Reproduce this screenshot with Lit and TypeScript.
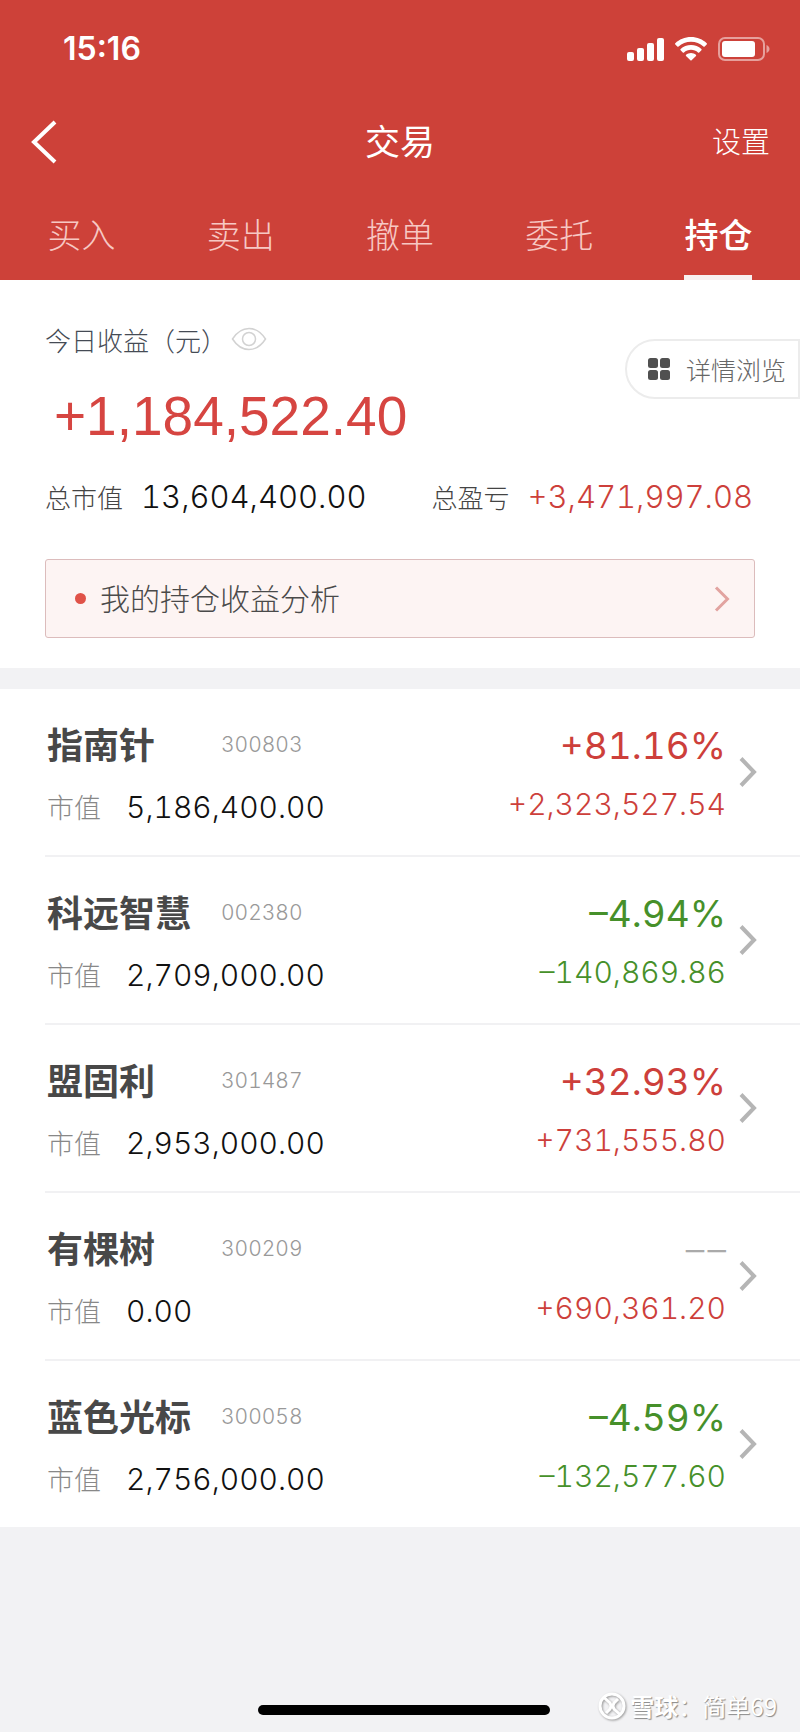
import { LitElement, html, css } from "lit";
import { customElement, property, state } from "lit/decorators.js";
import { classMap } from "lit/directives/class-map.js";

interface Holding {
  name: string;
  code: string;
  value: string;
  rate: string;
  profit: string;
}

const NO_RATE = "–\u200a–";

const HOLDINGS: Holding[] = [
  { name: "指南针", code: "300803", value: "5,186,400.00", rate: "+81.16%", profit: "+2,323,527.54" },
  { name: "科远智慧", code: "002380", value: "2,709,000.00", rate: "–4.94%", profit: "–140,869.86" },
  { name: "盟固利", code: "301487", value: "2,953,000.00", rate: "+32.93%", profit: "+731,555.80" },
  { name: "有棵树", code: "300209", value: "0.00", rate: NO_RATE, profit: "+690,361.20" },
  { name: "蓝色光标", code: "300058", value: "2,756,000.00", rate: "–4.59%", profit: "–132,577.60" },
];

const tone = (text: string) => ({
  up: text.startsWith("+"),
  down: /^–\d/.test(text),
  flat: text === NO_RATE,
});

const base = css`
  * {
    box-sizing: border-box;
  }
  button {
    margin: 0;
    padding: 0;
    border: 0;
    background: none;
    color: inherit;
    font: inherit;
    cursor: pointer;
  }
  a {
    color: inherit;
    text-decoration: none;
  }
  svg {
    display: block;
    flex: none;
  }
  .num {
    font-family: Inter, "Noto Sans CJK SC", sans-serif;
    font-weight: 300;
    font-variant-numeric: tabular-nums;
  }
  .up {
    color: #cd3f3b;
  }
  .down {
    color: #46902a;
  }
  .flat {
    color: #aaa;
  }
`;

@customElement("status-bar")
class StatusBar extends LitElement {
  static styles = [
    base,
    css`
      :host {
        display: flex;
        align-items: center;
        justify-content: space-between;
        height: 98px;
        padding: 0 30px 0 63px;
      }
      .time {
        font: 600 32px/38px Inter, sans-serif;
      }
      .icons {
        display: flex;
        align-items: center;
        gap: 10px;
      }
    `,
  ];

  render() {
    return html`
      <span class="time">15:16</span>
      <span class="icons">
        <svg width="38" height="24" viewBox="0 0 38 24" fill="#fff" aria-hidden="true">
          <rect x="0" y="15" width="7" height="9" rx="2" />
          <rect x="10" y="11" width="7" height="13" rx="2" />
          <rect x="20" y="6" width="7" height="18" rx="2" />
          <rect x="30" y="1" width="7" height="23" rx="2" />
        </svg>
        <svg width="32" height="24" viewBox="0 0 32 24" fill="#fff" aria-hidden="true">
          <path d="M16 0C9.800 0 4.200 2.400.3 6.200c-.4.4-.4.900 0 1.300l2 2c.3.400.900.400 1.300 0C6.800 6.500 11.200 4.700 16 4.700s9.200 1.800 12.400 4.800c.4.400 1 .4 1.300 0l2-2c.4-.4.4-.9 0-1.300C27.800 2.400 22.200 0 16 0z" />
          <path d="M16 7.900c-4 0-7.700 1.500-10.400 4-.4.400-.4 1 0 1.300l2.200 2.200c.3.300.8.300 1.200 0 1.800-1.700 4.300-2.700 7-2.700s5.200 1 7 2.700c.4.300.9.300 1.200 0l2.200-2.200c.4-.3.4-.9 0-1.300-2.700-2.500-6.400-4-10.400-4z" />
          <path d="M16 15.900c-1.900 0-3.600.7-4.900 1.800-.4.300-.4.800-.1 1.200l4.400 4.400c.3.300.9.300 1.200 0l4.400-4.400c.3-.4.300-.9-.1-1.200-1.300-1.100-3-1.800-4.900-1.800z" />
        </svg>
        <svg width="53" height="24" viewBox="0 0 53 24" aria-hidden="true">
          <rect x="2" y="1" width="45" height="22" rx="6" fill="none" stroke="#fff" stroke-opacity=".5" stroke-width="2" />
          <rect x="5" y="4" width="33" height="16" rx="3" fill="#fff" />
          <path d="M49.500 8c2 .8 3 2.400 3 4s-1 3.200-3 4z" fill="#fff" fill-opacity=".5" />
        </svg>
      </span>
    `;
  }
}

@customElement("trade-header")
class TradeHeader extends LitElement {
  @state() active = "持仓";

  static styles = [
    base,
    css`
      :host {
        display: block;
        background: #cd4139;
        color: #fff;
      }
      .bar {
        display: grid;
        grid-template-columns: 1fr auto 1fr;
        align-items: center;
        height: 88px;
        padding: 0 30px;
      }
      .back {
        justify-self: start;
      }
      .title {
        margin: 0;
        padding-bottom: 4px;
        font-size: 35px;
        font-weight: 400;
        line-height: 48px;
      }
      .settings {
        justify-self: end;
        padding-bottom: 4px;
        font-size: 29px;
        font-weight: 300;
        line-height: 40px;
      }
      .tabs {
        display: grid;
        grid-template-columns: repeat(5, 1fr);
        justify-items: center;
        height: 94px;
        padding: 0 2px;
      }
      .tab {
        color: #f7c8c4;
        border-top: 5px solid transparent;
        border-bottom: 5px solid transparent;
        font-size: 34px;
        font-weight: 300;
      }
      .tab.active {
        color: #fff;
        font-weight: 500;
        border-bottom-color: #f8f0f0;
      }
    `,
  ];

  render() {
    return html`
      <status-bar></status-bar>
      <div class="bar">
        <button class="back" aria-label="返回">
          <svg width="28" height="44" viewBox="0 0 28 44" fill="none" stroke="#fff" stroke-width="4">
            <path d="M25 2 4 22l21 20" />
          </svg>
        </button>
        <h1 class="title">交易</h1>
        <button class="settings">设置</button>
      </div>
      <nav class="tabs">
        ${["买入", "卖出", "撤单", "委托", "持仓"].map(
          (label) => html`<button
            class=${classMap({ tab: true, active: label === this.active })}
            @click=${() => (this.active = label)}
          >${label}</button>`
        )}
      </nav>
    `;
  }
}

@customElement("profit-summary")
class ProfitSummary extends LitElement {
  static styles = [
    base,
    css`
      :host {
        display: block;
        padding-bottom: 30px;
        background: #fff;
      }
      .hero {
        display: flex;
        justify-content: space-between;
        align-items: flex-start;
        padding: 39px 0 0 45px;
      }
      .caption {
        display: flex;
        align-items: center;
        gap: 4px;
        height: 40px;
        color: #454b55;
        font-size: 26px;
        font-weight: 300;
      }
      .today {
        margin: 25px 0 0 9px;
        font: 400 55px/64px "Liberation Sans", Arial, sans-serif;
        color: #d64541;
      }
      .detail {
        display: flex;
        align-items: center;
        gap: 16px;
        height: 60px;
        margin-top: 20px;
        padding: 0 12px 0 21px;
        border: 2px solid #ececec;
        border-radius: 30px 0 0 30px;
        color: #666;
        font-size: 25px;
        font-weight: 300;
      }
      .totals {
        display: flex;
        flex-wrap: wrap;
        justify-content: space-between;
        margin: 0;
        padding: 29px 47px 0 45px;
      }
      .total {
        display: flex;
        align-items: center;
        gap: 18px;
        color: #444;
        font-size: 26px;
        font-weight: 300;
        line-height: 40px;
      }
      .amount {
        margin: 0;
        font-size: 31px;
      }
      .plain {
        color: #111;
      }
      .analysis {
        display: flex;
        align-items: center;
        gap: 14px;
        height: 79px;
        margin: 42px 45px 0;
        padding: 0 24px 0 29px;
        border: 1px solid #dcbcbc;
        border-radius: 3px;
        background: #fdf4f3;
        color: #4a4a4a;
        font-size: 30px;
        font-weight: 300;
      }
      .label {
        padding-bottom: 4px;
      }
      .dot {
        width: 11px;
        height: 11px;
        border-radius: 50%;
        background: #e05248;
      }
      .go {
        margin-left: auto;
      }
    `,
  ];

  render() {
    return html`
      <div class="hero">
        <div>
          <div class="caption">
            <span>今日收益（元）</span>
            <button aria-label="隐藏金额">
              <svg width="36" height="24" viewBox="0 0 36 24" fill="none" stroke="#d2d2d2" stroke-width="1.500">
                <path d="M1.500 12C6 5 11.500 1.500 18 1.500S30 5 34.500 12C30 19 24.500 22.500 18 22.500S6 19 1.500 12z" />
                <circle cx="18" cy="12" r="6.500" />
              </svg>
            </button>
          </div>
          <div class="today">+1,184,522.40</div>
        </div>
        <button class="detail">
          <svg width="22" height="22" viewBox="0 0 22 22" fill="#505050" aria-hidden="true">
            <rect width="10" height="10" rx="2.500" />
            <rect x="12" width="10" height="10" rx="2.500" />
            <rect y="12" width="10" height="10" rx="2.500" />
            <rect x="12" y="12" width="10" height="10" rx="2.500" />
          </svg>
          <span>详情浏览</span>
        </button>
      </div>
      <dl class="totals">
        <div class="total"><dt>总市值</dt><dd class="amount num plain">13,604,400.00</dd></div>
        <div class="total"><dt>总盈亏</dt><dd class="amount num up">+3,471,997.08</dd></div>
      </dl>
      <a class="analysis" href="#analysis">
        <span class="dot"></span>
        <span class="label">我的持仓收益分析</span>
        <svg class="go" width="16" height="26" viewBox="0 0 16 26" fill="none" stroke="#e2a3a0" stroke-width="3">
          <path d="M2 1.500 13.500 13 2 24.500" />
        </svg>
      </a>
    `;
  }
}

@customElement("holding-row")
class HoldingRow extends LitElement {
  @property({ attribute: false }) item!: Holding;

  static styles = [
    base,
    css`
      :host {
        display: block;
      }
      .row {
        display: flex;
        align-items: center;
        height: 100%;
        padding: 0 43px 0 2px;
      }
      .info {
        flex: 1;
      }
      .line {
        display: flex;
        align-items: center;
      }
      .name {
        min-width: 174px;
        color: #484848;
        font-size: 36px;
        font-weight: 700;
        line-height: 52px;
      }
      .code {
        padding-top: 2px;
        color: #999;
        font-size: 21px;
      }
      .worth {
        gap: 25px;
        margin-top: 18px;
        color: #888;
        font-size: 27px;
        font-weight: 300;
        line-height: 40px;
      }
      .value {
        color: #111;
        font-size: 30px;
      }
      .result {
        display: flex;
        flex-direction: column;
        align-items: flex-end;
        margin-right: 13px;
      }
      .rate {
        font-size: 37px;
        font-weight: 400;
        line-height: 52px;
      }
      .rate.flat {
        font-weight: 300;
      }
      .profit {
        margin-top: 12px;
        font-size: 30px;
        line-height: 40px;
      }
    `,
  ];

  render() {
    const { name, code, value, rate, profit } = this.item;
    return html`
      <a class="row" href="#${code}">
        <div class="info">
          <div class="line"><span class="name">${name}</span><span class="code num">${code}</span></div>
          <div class="line worth"><span>市值</span><span class="value num">${value}</span></div>
        </div>
        <div class="result">
          <span class=${classMap({ rate: true, num: true, ...tone(rate) })}>${rate}</span>
          <span class=${classMap({ profit: true, num: true, ...tone(profit) })}>${profit}</span>
        </div>
        <svg width="18" height="30" viewBox="0 0 18 30" fill="none" stroke="#b5b5b5" stroke-width="4">
          <path d="M2 1.500 15 15 2 28.500" />
        </svg>
      </a>
    `;
  }
}

@customElement("app-root")
class AppRoot extends LitElement {
  static styles = [
    base,
    css`
      :host {
        display: flex;
        flex-direction: column;
        min-height: 100vh;
        background: #f2f2f4;
        font-family: "Noto Sans CJK SC", sans-serif;
      }
      .list {
        margin: 21px 0 0;
        padding: 0 0 0 45px;
        list-style: none;
        background: #fff;
      }
      .item {
        height: 168px;
        border-bottom: 2px solid #f1f1f3;
      }
      .item:last-child {
        height: 166px;
        border-bottom: 0;
      }
      .cell {
        height: 100%;
      }
      .footer {
        display: grid;
        grid-template-columns: 1fr 292px 1fr;
        align-items: end;
        margin-top: auto;
        padding: 0 23px 8px 30px;
      }
      .home {
        grid-column: 2;
        height: 10px;
        margin-bottom: 9px;
        border-radius: 5px;
        background: #000;
      }
      .credit {
        display: flex;
        align-items: center;
        justify-self: end;
        gap: 4px;
        color: #fff;
        font-size: 24px;
        line-height: 36px;
        white-space: nowrap;
        text-shadow: 1px 1px 1px #888;
      }
      .brand {
        font-weight: 700;
      }
      .logo {
        filter: drop-shadow(1px 1px 1px #999);
      }
    `,
  ];

  render() {
    return html`
      <trade-header></trade-header>
      <profit-summary></profit-summary>
      <ul class="list">
        ${HOLDINGS.map(
          (item) => html`<li class="item"><holding-row class="cell" .item=${item}></holding-row></li>`
        )}
      </ul>
      <footer class="footer">
        <div class="home"></div>
        <div class="credit">
          <svg class="logo" width="28" height="28" viewBox="0 0 28 28" fill="none" stroke="#fff" stroke-width="3">
            <circle cx="14" cy="14" r="12" />
            <path d="M6 5.500 12 11q2 3 0 6l-4 4M22 22.500 16 17q-2-3 0-6l4-4" />
          </svg>
          <span><span class="brand">雪球</span>：简单69</span>
        </div>
      </footer>
    `;
  }
}
